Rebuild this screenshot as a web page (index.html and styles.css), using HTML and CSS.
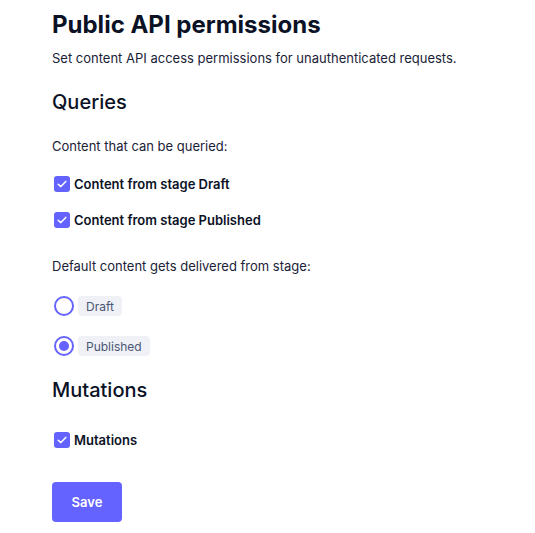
FILE: index.html
```html
<!DOCTYPE html>
<html>
<head>
<meta charset="utf-8">
<link rel="stylesheet" href="styles.css">
</head>
<body>
<main class="page">
  <h1 class="title">Public API permissions</h1>
  <p class="subtitle">Set content API access permissions for unauthenticated requests.</p>

  <h2 class="section section-queries">Queries</h2>
  <p class="label label-first">Content that can be queried:</p>
  <div class="checks">
    <label class="check">
      <span class="box"><svg width="12" height="12" viewBox="0 0 12 12"><path d="M2.2 6.2 L4.8 8.6 L9.8 3.4" fill="none" stroke="#fff" stroke-width="1.5" stroke-linecap="round" stroke-linejoin="round"/></svg></span>
      <span class="check-text">Content from stage Draft</span>
    </label>
    <label class="check">
      <span class="box"><svg width="12" height="12" viewBox="0 0 12 12"><path d="M2.2 6.2 L4.8 8.6 L9.8 3.4" fill="none" stroke="#fff" stroke-width="1.5" stroke-linecap="round" stroke-linejoin="round"/></svg></span>
      <span class="check-text">Content from stage Published</span>
    </label>
  </div>

  <p class="label label-second">Default content gets delivered from stage:</p>
  <div class="radios">
    <label class="radio">
      <span class="circle"></span>
      <span class="badge">Draft</span>
    </label>
    <label class="radio">
      <span class="circle checked"><span class="dot"></span></span>
      <span class="badge">Published</span>
    </label>
  </div>

  <h2 class="section section-mutations">Mutations</h2>
  <label class="check check-mut">
    <span class="box"><svg width="12" height="12" viewBox="0 0 12 12"><path d="M2.2 6.2 L4.8 8.6 L9.8 3.4" fill="none" stroke="#fff" stroke-width="1.5" stroke-linecap="round" stroke-linejoin="round"/></svg></span>
    <span class="check-text">Mutations</span>
  </label>

  <div class="actions">
    <button class="save">Save</button>
  </div>
</main>
</body>
</html>
```

FILE: styles.css
```css
* { box-sizing: border-box; }
html, body { margin: 0; padding: 0; background: #fff; }
body {
  font-family: Inter, "Noto Sans", sans-serif;
  color: #0f1629;
}
.page {
  display: flex;
  flex-direction: column;
  align-items: flex-start;
  padding: 9px 0 0 52px;
}
.title {
  margin: 0;
  font-size: 24px;
  line-height: 32px;
  font-weight: 700;
  color: #0b1225;
}
.subtitle {
  margin: 7px 0 0;
  font-size: 13px;
  line-height: 20px;
  color: #1a2238;
}
.section {
  margin: 0;
  font-size: 20px;
  line-height: 28px;
  font-weight: 500;
  color: #0b1225;
}
.section-queries { margin-top: 20px; }
.section-mutations { margin-top: 18px; }
.label {
  margin: 0;
  font-size: 13px;
  line-height: 20px;
  color: #1a2238;
}
.label-first { margin-top: 20px; }
.label-second { margin-top: 26px; }
.checks {
  display: flex;
  flex-direction: column;
  gap: 16px;
  margin-top: 18px;
}
.check {
  display: flex;
  align-items: center;
  gap: 4px;
  height: 20px;
  padding-left: 2px;
}
.box {
  width: 16px;
  height: 16px;
  border-radius: 3px;
  background: #6563ff;
  display: flex;
  align-items: center;
  justify-content: center;
}
.check-text {
  font-size: 13px;
  line-height: 20px;
  font-weight: 600;
  color: #0b1225;
}
.check-mut { margin-top: 26px; }
.radios {
  display: flex;
  flex-direction: column;
  gap: 16px;
  margin-top: 18px;
}
.radio {
  display: flex;
  align-items: center;
  gap: 4px;
  height: 24px;
  padding-left: 2px;
}
.circle {
  width: 20px;
  height: 20px;
  border-radius: 50%;
  border: 2px solid #6563ff;
  display: flex;
  align-items: center;
  justify-content: center;
}
.dot {
  width: 10px;
  height: 10px;
  border-radius: 50%;
  background: #6563ff;
}
.badge {
  display: inline-flex;
  align-items: center;
  height: 20px;
  padding: 0 8px;
  border-radius: 4px;
  background: #eff1f6;
  font-size: 12px;
  color: #4b5674;
}
.actions { margin-top: 32px; }
.save {
  width: 70px;
  height: 40px;
  border: 0;
  border-radius: 4px;
  background: #6563ff;
  color: #fff;
  font-family: Inter, "Noto Sans", sans-serif;
  font-size: 13px;
  font-weight: 600;
}
```
